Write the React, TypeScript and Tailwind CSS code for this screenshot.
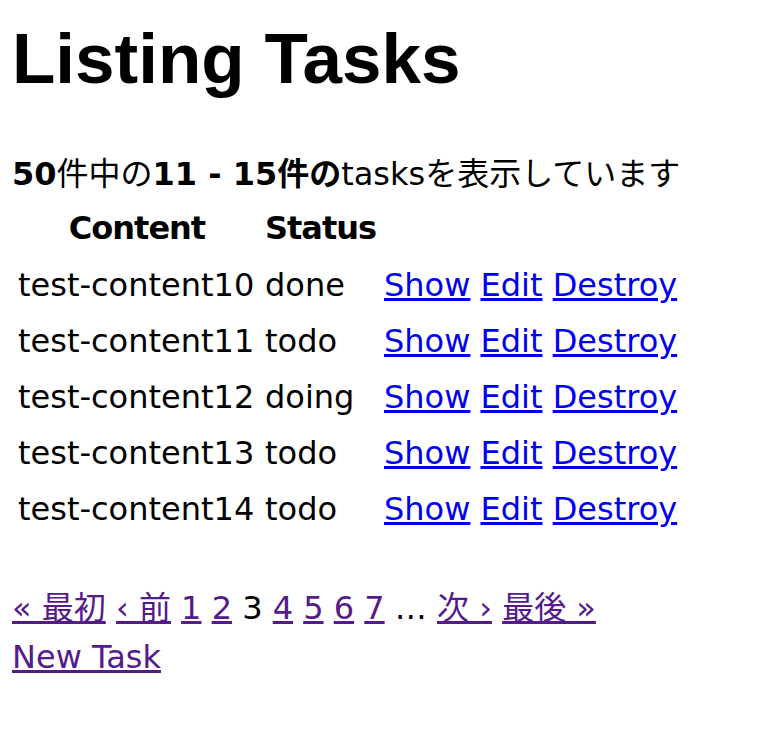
import React from "react";

const body = "font-['DejaVu_Sans','Noto_Sans_CJK_JP',sans-serif]";

const rows = [
  ["test-content10", "done"],
  ["test-content11", "todo"],
  ["test-content12", "doing"],
  ["test-content13", "todo"],
  ["test-content14", "todo"],
];

const linkBlue = "text-[#0000ee] underline";
const linkVisited = "text-[#551a8b] underline";

export default function App() {
  return (
    <div className={`${body} min-h-[740px] w-[760px] bg-white pl-[12px] text-[32px] text-black`}>
      <h1 className="pt-[23px] font-['Liberation_Sans','Noto_Sans_CJK_JP',sans-serif] text-[71px] font-bold leading-[71px]">
        Listing Tasks
      </h1>
      <div className="mt-[56px] h-[48px] whitespace-nowrap leading-[48px]">
        <b>50</b>件中の<b>11&nbsp;-&nbsp;15件の</b>tasksを表示しています
      </div>
      <div className="ml-[6px] mt-[2px] grid grid-cols-[238px_110px_auto] gap-x-[9px]">
        <div className="h-[57px] text-center font-bold leading-[57px] tracking-[-1px]">Content</div>
        <div className="h-[57px] text-center font-bold leading-[57px] tracking-[-1px] whitespace-nowrap">Status</div>
        <div className="h-[57px]" />
        {rows.map(([c, s]) => (
          <React.Fragment key={c}>
            <div className="h-[56px] whitespace-nowrap leading-[56px]">{c}</div>
            <div className="h-[56px] whitespace-nowrap leading-[56px]">{s}</div>
            <div className="h-[56px] whitespace-nowrap leading-[56px]">
              <a href="#" className={linkBlue}>Show</a>{" "}
              <a href="#" className={linkBlue}>Edit</a>{" "}
              <a href="#" className={linkBlue}>Destroy</a>
            </div>
          </React.Fragment>
        ))}
      </div>
      <nav className="mt-[46px] h-[50px] whitespace-nowrap leading-[50px]">
        <span><a href="#" className={linkVisited}>« 最初</a></span>{" "}
        <span><a href="#" className={linkVisited}>‹ 前</a></span>{" "}
        <span><a href="#" className={linkVisited}>1</a></span>{" "}
        <span><a href="#" className={linkVisited}>2</a></span>{" "}
        <span>3</span>{" "}
        <span><a href="#" className={linkVisited}>4</a></span>{" "}
        <span><a href="#" className={linkVisited}>5</a></span>{" "}
        <span><a href="#" className={linkVisited}>6</a></span>{" "}
        <span><a href="#" className={linkVisited}>7</a></span>{" "}
        <span>…</span>{" "}
        <span><a href="#" className={linkVisited}>次 ›</a></span>{" "}
        <span><a href="#" className={linkVisited}>最後 »</a></span>
      </nav>
      <div className="h-[48px] whitespace-nowrap leading-[48px]">
        <a href="#" className={linkVisited}>New Task</a>
      </div>
    </div>
  );
}
